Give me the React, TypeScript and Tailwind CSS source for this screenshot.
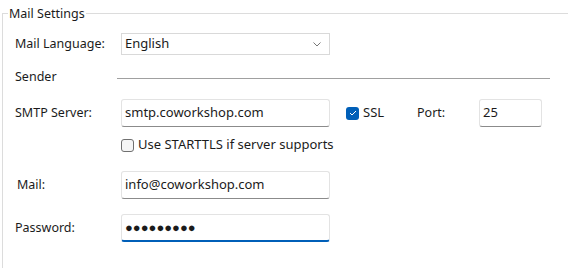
const Input = ({ value, active = false, w = "w-[209px]" }: { value: string; active?: boolean; w?: string }) => (
  <div
    className={`${w} h-[28px] rounded-[3px] border border-[#e3e3e3] bg-white flex items-center pl-[3px] text-[13px] text-[#1b1b1b] ${
      active ? "border-b-2 border-b-[#005fb8]" : "border-b-[#8b8b8b]"
    }`}
  >
    {value}
  </div>
);

const Checkbox = ({ checked, label }: { checked: boolean; label: string }) => (
  <div className="flex items-center gap-[4px]">
    {checked ? (
      <div className="w-[13px] h-[13px] rounded-[3px] bg-[#005fb8] flex items-center justify-center">
        <svg width="8" height="6" viewBox="0 0 8 6">
          <path d="M1 3l2 2 4-4" stroke="white" strokeWidth="1" fill="none" />
        </svg>
      </div>
    ) : (
      <div className="w-[13px] h-[13px] rounded-[3px] border border-[#707070] bg-[#f5f5f5]" />
    )}
    <span className="text-[13px] text-[#1b1b1b]">{label}</span>
  </div>
);

export default function App() {
  return (
    <div className="w-[568px] h-[268px] bg-white overflow-hidden pt-[13px] font-['Noto_Sans',sans-serif] text-[#1b1b1b]">
      <div className="ml-[2px] h-[260px] border-l border-t border-[#dcdcdc] pl-[12px]">
        <div className="-mt-[8px] -ml-[7px] w-fit bg-white px-[1px] text-[12.5px] leading-[15px]">
          Mail Settings
        </div>

        <div className="mt-[12px] flex items-center h-[22px]">
          <span className="w-[106px] text-[12.5px]">Mail Language:</span>
          <div className="w-[209px] h-[22px] border border-[#d9d9d9] bg-white flex items-center justify-between pl-[3px] pr-[8px] text-[13px]">
            English
            <svg width="8" height="5" viewBox="0 0 8 5">
              <path d="M0.5 0.5l3.5 3.5 3.5-3.5" stroke="#777" strokeWidth="1" fill="none" />
            </svg>
          </div>
        </div>

        <div className="mt-[11px] flex items-center h-[22px]">
          <span className="w-[102px] text-[12.5px]">Sender</span>
          <div className="w-[433px] h-px bg-[#a0a0a0] mt-[3px]" />
        </div>

        <div className="mt-[11px] flex items-center h-[28px]">
          <span className="w-[106px] text-[12.5px]">SMTP Server:</span>
          <Input value="smtp.coworkshop.com" />
          <div className="ml-[16px] w-[71px]">
            <Checkbox checked label="SSL" />
          </div>
          <span className="w-[62px] text-[12.5px]">Port:</span>
          <Input value="25" w="w-[63px]" />
        </div>

        <div className="mt-[11px] flex items-center h-[14px] pl-[106px]">
          <Checkbox checked={false} label="Use STARTTLS if server supports" />
        </div>

        <div className="mt-[19px] flex items-center h-[28px]">
          <span className="w-[106px] text-[12.5px] pl-[2px]">Mail:</span>
          <Input value="info@coworkshop.com" />
        </div>

        <div className="mt-[15px] flex items-center h-[28px]">
          <span className="w-[106px] text-[12.5px]">Password:</span>
          <Input value="●●●●●●●●●" active />
        </div>
      </div>
    </div>
  );
}
